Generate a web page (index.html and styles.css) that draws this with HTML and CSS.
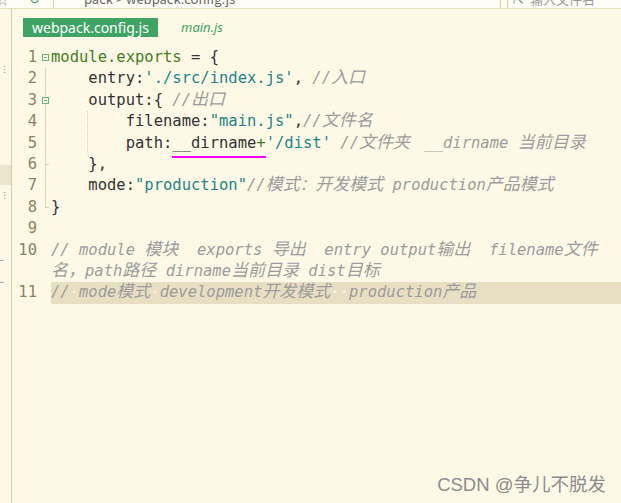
FILE: index.html
```html
<!DOCTYPE html>
<html lang="zh">
<head>
<meta charset="utf-8">
<title>webpack.config.js</title>
<link rel="stylesheet" href="styles.css">
</head>
<body>
<div class="top">
  <div class="top-inner">
    <span class="ti star">☆</span>
    <span class="ti refresh">↻</span>
    <span class="sep"></span>
    <span class="folder"></span>
    <span class="crumb">pack &gt; webpack.config.js</span>
    <span class="grow"></span>
    <span class="sep sep2"></span>
    <span class="search"><span class="sicon">⇱</span>输入文件名</span>
  </div>
</div>
<div class="main">
  <div class="side">
    <span class="sdot d1">⋮</span>
    <span class="shl"></span>
    <span class="sdot d2">⋮</span>
    <span class="sdot d3">…</span>
    <span class="sdot d4">…</span>
  </div>
  <div class="editor">
    <div class="tabs">
      <div class="tab active">webpack.config.js</div>
      <div class="tab">main.js</div>
    </div>
    <div class="code">
      <div class="row"><span class="num">1</span><span class="fold"><span class="box"></span></span><span class="txt"><span class="g">module.exports</span> = {</span></div>
      <div class="row"><span class="num">2</span><span class="fold"><span class="vl"></span></span><span class="txt">    entry:<span class="s">'./src/index.js'</span>, <span class="c">//<span class="z">入口</span></span></span></div>
      <div class="row"><span class="num">3</span><span class="fold"><span class="vl"></span><span class="box"></span></span><span class="txt">    output:{ <span class="c">//<span class="z">出口</span></span></span></div>
      <div class="row"><span class="num">4</span><span class="fold"><span class="vl"></span></span><span class="txt">    <span class="ig"></span>    filename:<span class="s">"main.js"</span>,<span class="c">//<span class="z">文件名</span></span></span></div>
      <div class="row"><span class="num">5</span><span class="fold"><span class="vl"></span></span><span class="txt">    <span class="ig"></span>    path:<span class="ul">__dirname<span class="g">+</span></span><span class="s">'/dist'</span> <span class="c">//<span class="z">文件夹</span> <span class="gap">__dirname</span> <span class="z">当前目录</span></span></span></div>
      <div class="row"><span class="num">6</span><span class="fold"><span class="vl"></span><span class="tick"></span></span><span class="txt">    },</span></div>
      <div class="row"><span class="num">7</span><span class="fold"><span class="vl"></span></span><span class="txt">    mode:<span class="s">"production"</span><span class="c">//<span class="z">模式</span>：<span class="z">开发模式</span> production<span class="z">产品模式</span></span></span></div>
      <div class="row"><span class="num">8</span><span class="fold"><span class="vl half"></span><span class="tick end"></span></span><span class="txt">}</span></div>
      <div class="row"><span class="num">9</span><span class="fold"></span><span class="txt"></span></div>
      <div class="row"><span class="num">10</span><span class="fold"></span><span class="txt"><span class="c">// module <span class="z">模块</span>  exports <span class="z">导出</span>  entry output<span class="z">输出</span>  filename<span class="z">文件</span></span></span></div>
      <div class="row"><span class="num"></span><span class="fold"></span><span class="txt"><span class="c"><span class="z">名，</span>path<span class="z">路径</span> dirname<span class="z">当前目录</span> dist<span class="z">目标</span></span></span></div>
      <div class="row cur"><span class="num">11</span><span class="fold"></span><span class="txt"><span class="c">//<span class="ws">·</span>mode<span class="z">模式</span><span class="ws">·</span>development<span class="z">开发模式</span><span class="ws">··</span>production<span class="z">产品</span></span></span></div>
    </div>
  </div>
</div>
<div class="mark">CSDN @争儿不脱发</div>
</body>
</html>
```
FILE: styles.css
```css
html, body {
  margin: 0;
  padding: 0;
}
body {
  width: 621px;
  height: 503px;
  overflow: hidden;
  background: #fef9e7;
  font-family: "DejaVu Sans Mono", "Noto Sans CJK SC", monospace;
  position: relative;
}
.top {
  height: 8px;
  overflow: hidden;
  background: #fffdf6;
  border-bottom: 1px solid #e6dcbc;
}
.top-inner {
  margin-top: -10px;
  height: 18px;
  display: flex;
  align-items: flex-end;
  font-family: "Noto Sans CJK SC", "Noto Sans", sans-serif;
  font-size: 13px;
  line-height: 18px;
  color: #666;
}
.ti {
  font-size: 13px;
}
.star {
  margin-left: -4px;
  color: #999;
}
.refresh {
  margin-left: 20px;
  color: #4a9a5a;
}
.sep {
  width: 1px;
  height: 18px;
  background: #d9cfa8;
  margin-left: 13px;
  align-self: stretch;
}
.folder {
  width: 11px;
  height: 9px;
  background: #c9a860;
  margin-left: 5px;
  margin-bottom: 8px;
}
.crumb {
  margin-left: 14px;
}
.grow {
  flex: 1;
}
.sep2 {
  margin-right: 6px;
}
.search {
  width: 108px;
  border-left: 1px solid #d9cfa8;
  padding-left: 5px;
  color: #999;
  background: #fffdf6;
}
.sicon {
  color: #4a9a5a;
  margin-right: 6px;
}
.main {
  display: flex;
  height: 494px;
}
.side {
  width: 11px;
  border-right: 1px solid #d8cca8;
  position: relative;
  flex: none;
}
.shl {
  position: absolute;
  left: 0;
  top: 156px;
  width: 11px;
  height: 20px;
  background: #ede6cf;
}
.sdot {
  position: absolute;
  left: 0;
  font-size: 9px;
  color: #8a8aa0;
  line-height: 10px;
}
.d1 { top: 56px; }
.d2 { top: 182px; }
.d3 { top: 244px; left: -2px; }
.d4 { top: 266px; left: -2px; }
.editor {
  flex: 1;
  min-width: 0;
}
.tabs {
  display: flex;
  align-items: center;
  padding: 9px 0 0 11px;
  height: 19px;
  font-family: "Noto Sans", "DejaVu Sans", sans-serif;
  font-size: 13px;
}
.tab {
  height: 19px;
  line-height: 19px;
  color: #3ea35f;
  font-style: italic;
  padding: 0 0 0 23px;
}
.tab.active {
  background: #3fa463;
  color: #fff;
  font-style: normal;
  font-size: 14px;
  width: 126px;
  padding: 0 0 0 9px;
}
.code {
  margin-top: 10px;
  font-size: 15.5px;
}
.row {
  display: flex;
  height: 21.4px;
  line-height: 21.4px;
  white-space: pre;
}
.num {
  width: 25px;
  text-align: right;
  color: #8e8162;
  flex: none;
}
.fold {
  width: 14px;
  flex: none;
  position: relative;
}
.box {
  position: absolute;
  left: 5px;
  top: 7px;
  width: 5px;
  height: 5px;
  border: 1px solid #6bb27a;
  background: #fef9e7;
}
.box::after {
  content: "";
  position: absolute;
  left: 1px;
  top: 2px;
  width: 3px;
  height: 1px;
  background: #6bb27a;
}
.vl {
  position: absolute;
  left: 8px;
  top: 0;
  bottom: 0;
  width: 1px;
  background: #ddd3b6;
}
.vl.half {
  bottom: 10px;
}
.tick {
  position: absolute;
  left: 8px;
  top: 10px;
  width: 4px;
  height: 1px;
  background: #ddd3b6;
}
.txt {
  color: #333;
  flex: 1;
  min-width: 0;
}
.row.cur .txt {
  background: #e8dfc3;
}
.z {
  font-size: 17px;
  line-height: 0;
}
.gap {
  margin-left: 5px;
}
.g { color: #3f7e1e; }
.s { color: #218585; }
.c {
  color: #9c9c9c;
  font-style: italic;
}
.ws {
  color: #fbf7ea;
}
.ul {
  background: linear-gradient(#f0f, #f0f) no-repeat 0 100% / 100% 2px;
  padding-bottom: 6px;
}
.ig {
  display: inline-block;
  width: 0;
  height: 21px;
  vertical-align: top;
  border-left: 1px dotted #d8d0b8;
  margin-left: -1px;
}
.mark {
  position: absolute;
  right: 15px;
  bottom: 7px;
  font-family: "Liberation Sans", "Noto Sans CJK SC", sans-serif;
  font-size: 18.5px;
  color: #8c8c8c;
}
```
